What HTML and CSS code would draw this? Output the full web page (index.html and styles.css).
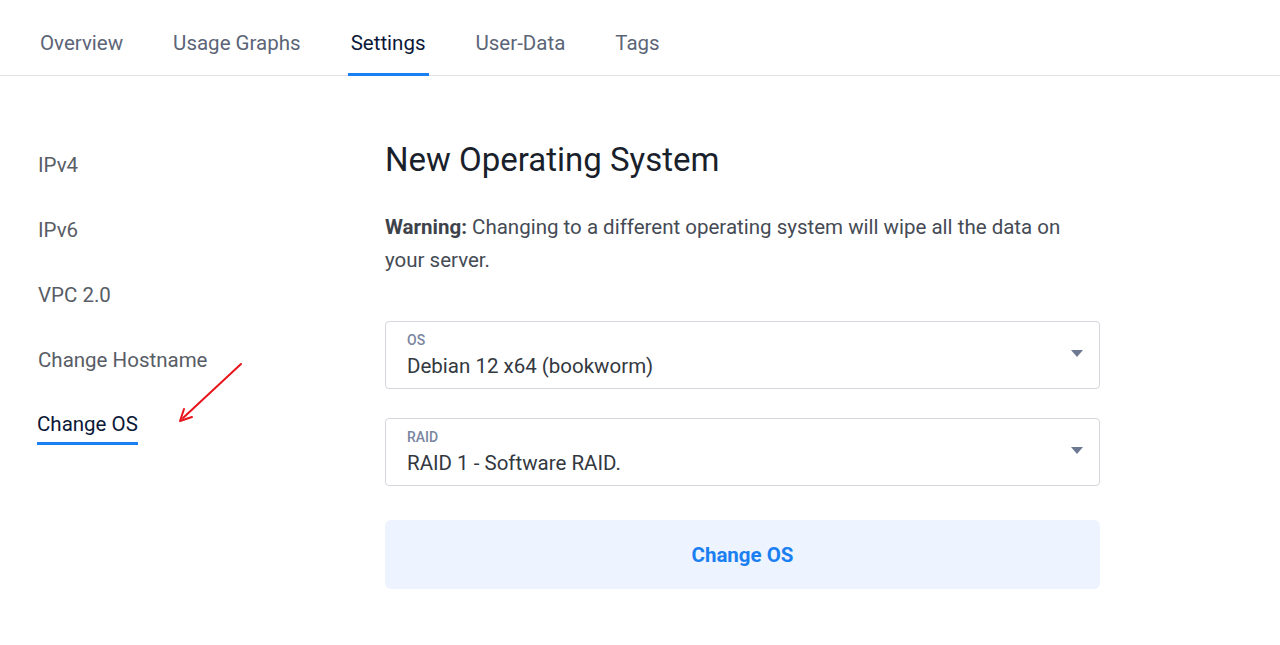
FILE: index.html
```html
<!DOCTYPE html>
<html lang="en">
<head>
<meta charset="utf-8">
<title>Settings - Change OS</title>
<link rel="stylesheet" href="styles.css">
</head>
<body>
<header class="tabs">
  <a class="tab">Overview</a>
  <a class="tab">Usage Graphs</a>
  <a class="tab active">Settings</a>
  <a class="tab">User-Data</a>
  <a class="tab">Tags</a>
</header>
<main class="layout">
  <nav class="side">
    <a class="side-item">IPv4</a>
    <a class="side-item">IPv6</a>
    <a class="side-item">VPC 2.0</a>
    <a class="side-item">Change Hostname</a>
    <a class="side-item active">Change OS</a>
    <svg class="annot" width="70" height="64" viewBox="0 0 70 64">
      <line x1="66" y1="2" x2="8" y2="56" stroke="#e8141b" stroke-width="2" stroke-linecap="round"/>
      <path d="M5 59 L9 47 M5 59 L17 55" stroke="#e8141b" stroke-width="2" stroke-linecap="round" fill="none"/>
    </svg>
  </nav>
  <section class="content">
    <h1 class="title">New Operating System</h1>
    <p class="warning"><strong>Warning:</strong> <span>Changing to a different operating system will wipe all the data on your server.</span></p>
    <div class="field">
      <div class="field-text">
        <span class="field-label">OS</span>
        <span class="field-value">Debian 12 x64 (bookworm)</span>
      </div>
      <span class="caret"></span>
    </div>
    <div class="field">
      <div class="field-text">
        <span class="field-label">RAID</span>
        <span class="field-value">RAID 1 - Software RAID.</span>
      </div>
      <span class="caret"></span>
    </div>
    <button class="submit">Change OS</button>
  </section>
</main>
</body>
</html>
```

FILE: styles.css
```css
* { box-sizing: border-box; }
html, body { margin: 0; padding: 0; background: #fff; }
body { font-family: Roboto, "Noto Sans", Arial, sans-serif; color: #3d4450; }

.tabs {
  display: flex;
  gap: 44px;
  padding-left: 37px;
  height: 76px;
  border-bottom: 1px solid #e1e3e6;
}
.tab {
  display: flex;
  align-items: center;
  padding: 13px 3px 0;
  height: 76px;
  font-size: 20.5px;
  color: #5c6577;
  border-bottom: 3px solid transparent;
  margin-bottom: -1px;
}
.tab.active {
  color: #0c1838;
  border-bottom-color: #1a7ff0;
}

.layout {
  display: grid;
  grid-template-columns: 348px 715px;
  padding-left: 37px;
  padding-top: 64px;
}

.side {
  position: relative;
  display: flex;
  flex-direction: column;
  align-items: flex-start;
  gap: 41px;
  padding-top: 13px;
}
.side-item {
  font-size: 20.5px;
  line-height: 24px;
  color: #585d66;
  padding-left: 1px;
}
.side-item.active {
  color: #0c1838;
  padding-left: 0;
  padding-bottom: 6px;
  border-bottom: 3px solid #1a7ff0;
  margin-top: -1px;
  margin-bottom: -10px;
}
.annot {
  position: absolute;
  left: 138px;
  top: 222px;
}

.content { display: flex; flex-direction: column; }
.title {
  margin: 0;
  font-size: 33px;
  line-height: 40px;
  font-weight: 400;
  color: #1a1f2c;
}
.warning {
  margin: 31px 0 0;
  font-size: 20.5px;
  line-height: 33px;
  color: #454b55;
  width: 705px;
}
.warning strong { font-weight: 700; color: #3d424b; }

.field {
  display: flex;
  align-items: center;
  justify-content: space-between;
  height: 68px;
  border: 1px solid #d3d6db;
  border-radius: 4px;
  padding: 10px 16px 10px 21px;
  margin-top: 29px;
}
.warning + .field { margin-top: 44px; }
.field-text { display: flex; flex-direction: column; gap: 6px; }
.field-label {
  font-size: 14px;
  line-height: 16px;
  font-weight: 500;
  color: #7a85a0;
}
.field-value {
  font-size: 20.5px;
  line-height: 24px;
  color: #33383f;
}
.caret {
  width: 0; height: 0;
  border-left: 6px solid transparent;
  border-right: 6px solid transparent;
  border-top: 7px solid #6d7893;
  margin-top: -4px;
}

.submit {
  margin-top: 34px;
  height: 69px;
  border: 0;
  border-radius: 6px;
  background: #edf3ff;
  color: #1a7ff0;
  font-family: inherit;
  font-size: 20.5px;
  font-weight: 700;
  cursor: pointer;
}
```
